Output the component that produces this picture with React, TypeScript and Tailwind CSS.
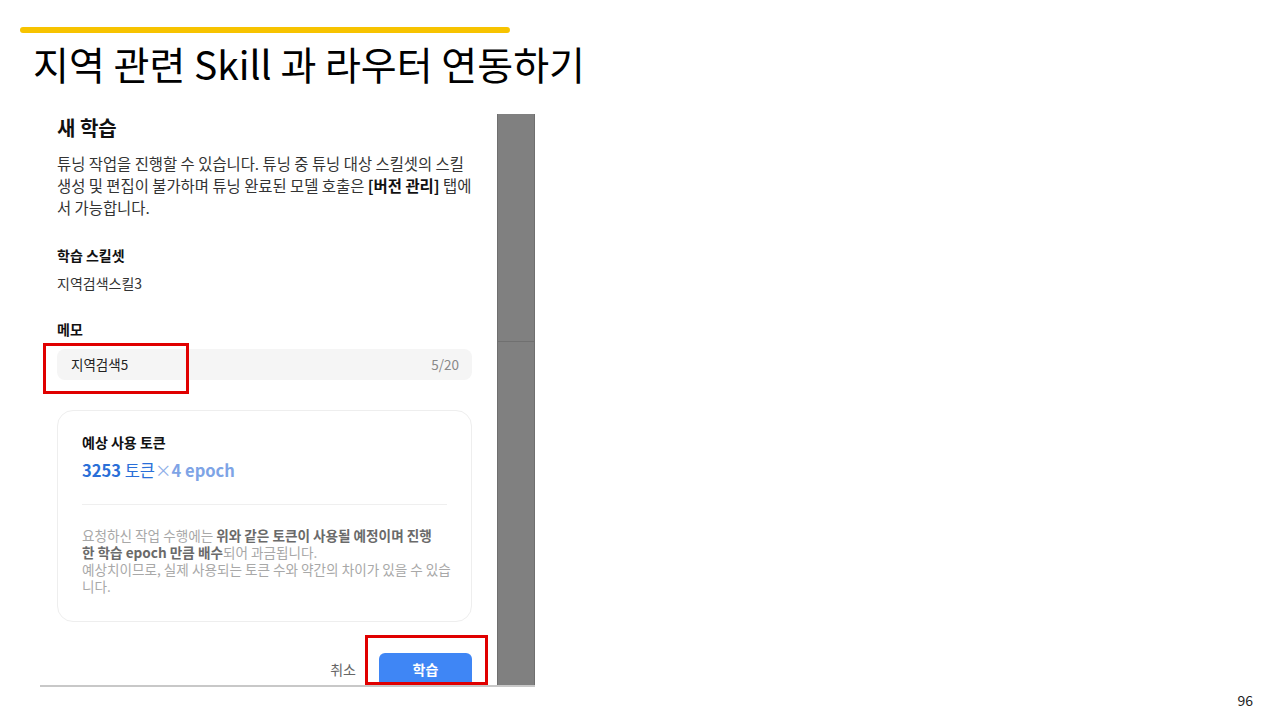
import React from 'react';

const kr = { fontFamily: '"Noto Sans CJK KR", "Noto Sans", sans-serif' };

function MarkBox({ className }: { className: string }) {
  return <div className={`pointer-events-none absolute border-[3px] border-[#e00000] ${className}`} />;
}

function TrainDialog() {
  return (
    <div className="flex h-[573px] w-[495px] border-b-2 border-[#c8c8c8]">
      <div className="flex w-[457px] flex-col overflow-hidden bg-white pl-[17px] pr-[25px] [&>*]:shrink-0">
        <h2 className="text-[20px] leading-[28px] font-bold text-[#111]">새 학습</h2>
        <p className="mt-[10px] whitespace-nowrap text-[15.4px] leading-[22px] text-[#333]">
          튜닝 작업을 진행할 수 있습니다. 튜닝 중 튜닝 대상 스킬셋의 스킬
          <br />
          생성 및 편집이 불가하며 튜닝 완료된 모델 호출은 <b className="text-[#111]">[버전 관리]</b> 탭에
          <br />서 가능합니다.
        </p>

        <div className="mt-[27px] text-[14px] leading-[20px] font-bold text-[#111]">학습 스킬셋</div>
        <div className="mt-[8px] text-[14px] leading-[20px] text-[#333]">지역검색스킬3</div>

        <div className="mt-[26px] text-[14px] leading-[20px] font-bold text-[#111]">메모</div>
        <div className="relative mt-[10px] flex h-[31px] items-center justify-between rounded-lg bg-[#f5f5f5] pl-[14px] pr-[13px]">
          <span className="text-[13.5px] text-[#222]">지역검색5</span>
          <span className="text-[13.5px] text-[#888]">5/20</span>
          <MarkBox className="-left-[14px] -top-[6px] h-[51px] w-[146px]" />
        </div>

        <div className="mt-[30px] h-[212px] rounded-2xl border border-[#eeeeee] px-6 pt-[21px]">
          <div className="text-[14px] leading-[20px] font-bold text-[#111]">예상 사용 토큰</div>
          <div className="mt-[6px] text-[16.5px] leading-[24px] font-bold">
            <span className="text-[#2a6fd8]">3253 </span>
            <span className="font-normal text-[#2a6fd8]">토큰</span>
            <span className="font-normal text-[#8eaee8]">×</span>
            <span className="text-[#7ea4e6]">4 epoch</span>
          </div>
          <div className="mt-[22px] h-px bg-[#efefef]" />
          <p className="mt-[22px] whitespace-nowrap text-[13.6px] leading-[17px] text-[#a8a8a8]">
            요청하신 작업 수행에는{' '}
            <b className="text-[#6a6a6a]">
              위와 같은 토큰이 사용될 예정이며 진행
              <br />한 학습 epoch 만큼 배수
            </b>
            되어 과금됩니다.
            <br />
            예상치이므로, 실제 사용되는 토큰 수와 약간의 차이가 있을 수 있습
            <br />
            니다.
          </p>
        </div>

        <div className="mt-[31px] flex items-start justify-end gap-[23px]">
          <span className="mt-[6px] text-[14px] leading-[20px] text-[#666]">취소</span>
          <div className="relative">
            <button className="h-[40px] w-[93px] rounded-md bg-[#3f86f5] pb-[8px] text-[14px] font-bold text-white">
              학습
            </button>
            <MarkBox className="-left-[14px] -top-[18px] h-[50px] w-[123px]" />
          </div>
        </div>
      </div>

      <div className="flex w-[38px] flex-col border-x border-[#6f6f6f] bg-[#808080]">
        <div className="h-[228px] border-b border-[#707070]" />
      </div>
    </div>
  );
}

export default function App() {
  return (
    <div className="flex h-[720px] w-[1280px] flex-col bg-white" style={kr}>
      <div className="ml-[20px] mt-[27px] h-[6px] w-[490px] rounded-full bg-[#f7c300]" />
      <h1 className="ml-[33px] mt-[6px] text-[39px] leading-[48px] font-normal text-black">
        지역 관련 Skill 과 라우터 연동하기
      </h1>
      <div className="ml-[40px] mt-[27px]">
        <TrainDialog />
      </div>
      <div className="mt-[3px] pr-[27px] text-right text-[14px] leading-[20px] text-[#222]">96</div>
    </div>
  );
}
